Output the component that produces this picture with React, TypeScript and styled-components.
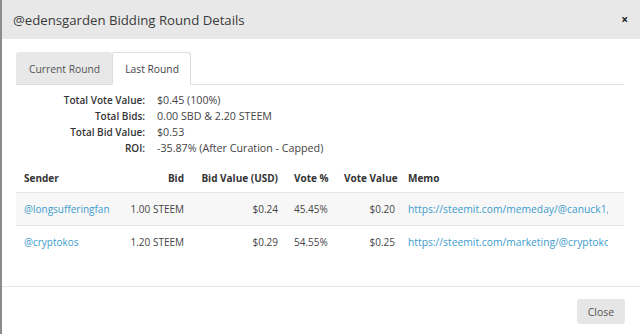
import React from "react";
import styled, { createGlobalStyle } from "styled-components";

const GlobalStyle = createGlobalStyle`
  html, body {
    margin: 0;
    padding: 0;
    background: #fff;
  }
  body {
    font-family: "Open Sans", "Liberation Sans", sans-serif;
    color: #333;
  }
`;

const Modal = styled.div`
  box-sizing: border-box;
  width: 640px;
  height: 334px;
  border-left: 2px solid #8c8c8c;
  display: flex;
  flex-direction: column;
  background: #fff;
  overflow: hidden;
`;

const Header = styled.div`
  height: 39px;
  flex-shrink: 0;
  background: #e8e8e8;
  display: flex;
  align-items: center;
  justify-content: space-between;
  padding: 0 12px 0 11px;
`;

const Title = styled.h4`
  margin: 0;
  font-size: 13.2px;
  font-weight: 400;
  color: #3a3a3a;
`;

const CloseX = styled.span`
  font-size: 12px;
  font-weight: 700;
  color: #222;
  line-height: 1;
`;

const Body = styled.div`
  flex: 1;
  padding: 13px 16px 0 14px;
`;

const TabNav = styled.div`
  display: flex;
  border-bottom: 1px solid #ddd;
  height: 32px;
`;

const Tab = styled.div<{ $active?: boolean }>`
  display: flex;
  align-items: center;
  padding: 0 11px 0 12px;
  font-size: 10.3px;
  color: ${(p) => (p.$active ? "#444" : "#555")};
  background: ${(p) => (p.$active ? "#fff" : "#e8e8e8")};
  border: 1px solid ${(p) => (p.$active ? "#ddd" : "#e8e8e8")};
  border-bottom: ${(p) => (p.$active ? "1px solid #fff" : "1px solid #ddd")};
  border-radius: 3px 3px 0 0;
  margin-bottom: -1px;
`;

const Stats = styled.div`
  display: grid;
  grid-template-columns: 129px 1fr;
  column-gap: 12px;
  margin-top: 7px;
  line-height: 16px;
`;

const StatLabel = styled.div`
  text-align: right;
  font-size: 10px;
  font-weight: 600;
  color: #333;
`;

const StatValue = styled.div`
  font-size: 10.7px;
  color: #444;
`;

const Table = styled.table`
  margin-top: 8px;
  width: 608px;
  table-layout: fixed;
  border-collapse: collapse;
  font-size: 10px;
`;

const Th = styled.th<{ $right?: boolean }>`
  text-align: ${(p) => (p.$right ? "right" : "left")};
  font-weight: 700;
  color: #333;
  height: 28px;
  padding: 0 8px;
  border-bottom: 1px solid #e6e6e6;
  white-space: nowrap;
`;

const MemoTh = styled(Th)`
  padding-left: 5px;
`;

const Row = styled.tr<{ $striped?: boolean }>`
  background: ${(p) => (p.$striped ? "#f7f7f7" : "#fff")};
  border-top: 1px solid #e3e3e3;
`;

const Td = styled.td<{ $right?: boolean }>`
  text-align: ${(p) => (p.$right ? "right" : "left")};
  height: 32px;
  padding: 0 8px;
  color: #444;
  white-space: nowrap;
  overflow: hidden;
`;

const MemoTd = styled(Td)`
  padding: 0 0 0 5px;
`;

const MemoClip = styled.div`
  width: 200px;
  overflow: hidden;
  white-space: nowrap;
  font-size: 10.3px;
`;

const Link = styled.a`
  color: #3d9ccc;
  text-decoration: none;
`;

const Footer = styled.div`
  flex-shrink: 0;
  border-top: 1px solid #e5e5e5;
  display: flex;
  justify-content: flex-end;
  padding: 12px 15px 10px;
`;

const CloseButton = styled.button`
  width: 48px;
  height: 25px;
  border: none;
  border-radius: 3px;
  background: #e6e6e6;
  color: #555;
  font-family: inherit;
  font-size: 10.5px;
  padding: 0;
`;

const stats = [
  ["Total Vote Value:", "$0.45 (100%)"],
  ["Total Bids:", "0.00 SBD & 2.20 STEEM"],
  ["Total Bid Value:", "$0.53"],
  ["ROI:", "-35.87% (After Curation - Capped)"],
];

const bids = [
  {
    sender: "@longsufferingfan",
    bid: "1.00 STEEM",
    value: "$0.24",
    pct: "45.45%",
    vote: "$0.20",
    memo: "https://steemit.com/memeday/@canuck1,",
  },
  {
    sender: "@cryptokos",
    bid: "1.20 STEEM",
    value: "$0.29",
    pct: "54.55%",
    vote: "$0.25",
    memo: "https://steemit.com/marketing/@cryptoko",
  },
];

export default function App() {
  return (
    <>
      <GlobalStyle />
      <Modal>
        <Header>
          <Title>@edensgarden Bidding Round Details</Title>
          <CloseX>×</CloseX>
        </Header>
        <Body>
          <TabNav>
            <Tab>Current Round</Tab>
            <Tab $active>Last Round</Tab>
          </TabNav>
          <Stats>
            {stats.map(([label, value]) => (
              <React.Fragment key={label}>
                <StatLabel>{label}</StatLabel>
                <StatValue>{value}</StatValue>
              </React.Fragment>
            ))}
          </Stats>
          <Table>
            <colgroup>
              <col style={{ width: 106 }} />
              <col style={{ width: 70 }} />
              <col style={{ width: 94 }} />
              <col style={{ width: 50 }} />
              <col style={{ width: 67 }} />
              <col style={{ width: 221 }} />
            </colgroup>
            <thead>
              <tr>
                <Th>Sender</Th>
                <Th $right>Bid</Th>
                <Th $right>Bid Value (USD)</Th>
                <Th>Vote %</Th>
                <Th $right>Vote Value</Th>
                <MemoTh>Memo</MemoTh>
              </tr>
            </thead>
            <tbody>
              {bids.map((b, i) => (
                <Row key={b.sender} $striped={i % 2 === 0}>
                  <Td>
                    <Link href="#">{b.sender}</Link>
                  </Td>
                  <Td $right>{b.bid}</Td>
                  <Td $right>{b.value}</Td>
                  <Td>{b.pct}</Td>
                  <Td $right>{b.vote}</Td>
                  <MemoTd>
                    <MemoClip>
                      <Link href="#">{b.memo}</Link>
                    </MemoClip>
                  </MemoTd>
                </Row>
              ))}
            </tbody>
          </Table>
        </Body>
        <Footer>
          <CloseButton>Close</CloseButton>
        </Footer>
      </Modal>
    </>
  );
}
